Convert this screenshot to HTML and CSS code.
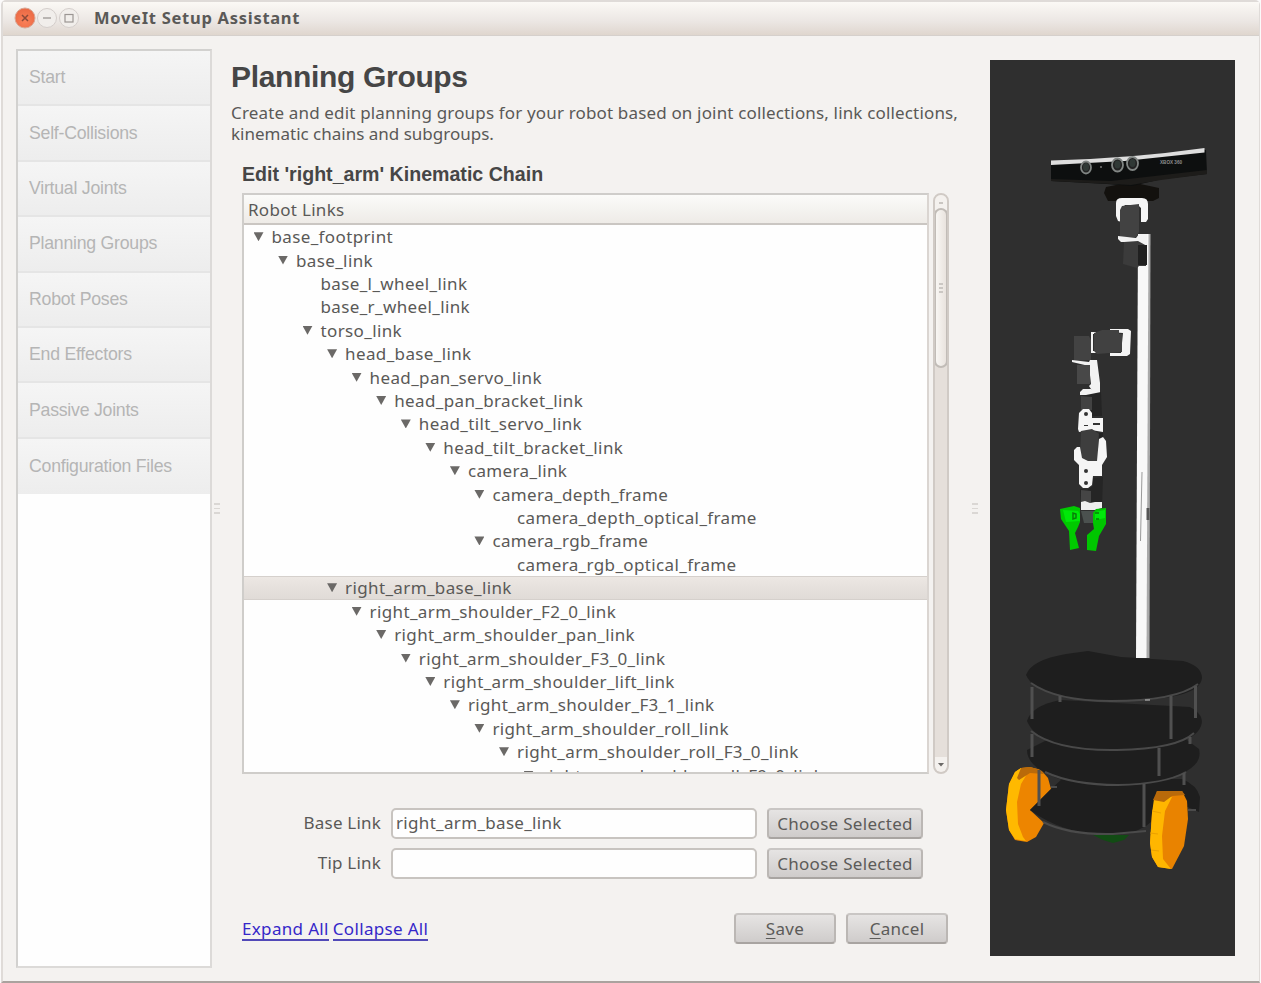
FILE: index.html
```html
<!DOCTYPE html>
<html lang="en">
<head>
<meta charset="utf-8">
<title>MoveIt Setup Assistant</title>
<link rel="stylesheet" href="styles.css">
</head>
<body>
<div class="window">
  <header class="titlebar">
    <svg class="controls" viewBox="0 0 68 26" width="68" height="26">
      <defs>
        <radialGradient id="close" cx=".5" cy=".65" r=".6"><stop offset="0" stop-color="#fb8058"/><stop offset="1" stop-color="#ea6a45"/></radialGradient>
      </defs>
      <circle cx="12" cy="13" r="10" fill="url(#close)" stroke="#d9a795" stroke-width="1"/>
      <path d="M9 10l6 6M15 10l-6 6" stroke="#8b4938" stroke-width="1.5"/>
      <circle cx="34" cy="13" r="9.5" fill="#f1eeeb" stroke="#d4cecb"/>
      <path d="M30 13h8" stroke="#9b9693" stroke-width="1.3"/>
      <circle cx="56" cy="13" r="9.5" fill="#f1eeeb" stroke="#d4cecb"/>
      <rect x="52" y="9.500" width="8" height="7.500" fill="none" stroke="#9b9693" stroke-width="1.2"/>
    </svg>
    <span class="title">MoveIt Setup Assistant</span>
  </header>
  <div class="body">
    <nav class="sidebar">
      <div class="step"><span>Start</span></div>
      <div class="step"><span>Self-Collisions</span></div>
      <div class="step"><span>Virtual Joints</span></div>
      <div class="step"><span>Planning Groups</span></div>
      <div class="step"><span>Robot Poses</span></div>
      <div class="step"><span>End Effectors</span></div>
      <div class="step"><span>Passive Joints</span></div>
      <div class="step"><span>Configuration Files</span></div>
    </nav>
    <div class="splitter left"><i></i><i></i><i></i></div>
    <main class="main">
      <h1>Planning Groups</h1>
      <p class="desc"><span class="d1">Create and edit planning groups for your robot based on joint collections, link collections,</span><br><span class="d2">kinematic chains and subgroups.</span></p>
      <h2>Edit 'right_arm' Kinematic Chain</h2>
      <div class="tree-area">
        <div class="tree">
          <div class="tree-head">Robot Links</div>
          <div class="rows">
            <div class="row l0"><b></b><span>base_footprint</span></div>
            <div class="row l1"><b></b><span>base_link</span></div>
            <div class="row l2 leaf"><b></b><span>base_l_wheel_link</span></div>
            <div class="row l2 leaf"><b></b><span>base_r_wheel_link</span></div>
            <div class="row l2"><b></b><span>torso_link</span></div>
            <div class="row l3"><b></b><span>head_base_link</span></div>
            <div class="row l4"><b></b><span>head_pan_servo_link</span></div>
            <div class="row l5"><b></b><span>head_pan_bracket_link</span></div>
            <div class="row l6"><b></b><span>head_tilt_servo_link</span></div>
            <div class="row l7"><b></b><span>head_tilt_bracket_link</span></div>
            <div class="row l8"><b></b><span>camera_link</span></div>
            <div class="row l9"><b></b><span>camera_depth_frame</span></div>
            <div class="row l10 leaf"><b></b><span>camera_depth_optical_frame</span></div>
            <div class="row l9"><b></b><span>camera_rgb_frame</span></div>
            <div class="row l10 leaf"><b></b><span>camera_rgb_optical_frame</span></div>
            <div class="row l3 selected"><b></b><span>right_arm_base_link</span></div>
            <div class="row l4"><b></b><span>right_arm_shoulder_F2_0_link</span></div>
            <div class="row l5"><b></b><span>right_arm_shoulder_pan_link</span></div>
            <div class="row l6"><b></b><span>right_arm_shoulder_F3_0_link</span></div>
            <div class="row l7"><b></b><span>right_arm_shoulder_lift_link</span></div>
            <div class="row l8"><b></b><span>right_arm_shoulder_F3_1_link</span></div>
            <div class="row l9"><b></b><span>right_arm_shoulder_roll_link</span></div>
            <div class="row l10"><b></b><span>right_arm_shoulder_roll_F3_0_link</span></div>
            <div class="row l11"><b></b><span>right_arm_shoulder_roll_F9_0_link</span></div>
          </div>
        </div>
        <div class="scrollbar">
          <div class="up"><i></i></div>
          <div class="thumb"><i></i><i></i><i></i></div>
          <div class="down"><b></b></div>
        </div>
      </div>
      <div class="form">
        <label>Base Link</label><div class="input">right_arm_base_link</div><button class="btn">Choose Selected</button>
        <label>Tip Link</label><div class="input"></div><button class="btn">Choose Selected</button>
      </div>
      <footer class="footer">
        <div class="links"><a>Expand All</a><a>Collapse All</a></div>
        <div class="actions"><button class="btn"><u>S</u>ave</button><button class="btn"><u>C</u>ancel</button></div>
      </footer>
    </main>
    <div class="splitter right"><i></i><i></i><i></i></div>
    <svg class="robot" viewBox="990 60 245 896" width="245" height="896">
      <rect x="990" y="60" width="245" height="896" fill="#2f2f2f"/>
      <!-- mast -->
      <path d="M1138 234h11v424h-13z" fill="#f8f8f8"/>
      <path d="M1148.500 234h2l-1 424h-3z" fill="#a9a9a9"/>
      <path d="M1142 472l-1.500 69" stroke="#999" stroke-width="1"/>
      <path d="M1148 508v12" stroke="#555" stroke-width="3"/>
      <!-- sensor -->
      <path d="M1106 187l25-5 28 6v10l-6 3h-45l-4-8z" fill="#13110e"/>
      <path d="M1051 163l155-13 1 24-45 5-30 7-25-2-56-3z" fill="#0d0f0f"/>
      <path d="M1051 179l60 2 96-11v4l-46 6-30 5-80-4z" fill="#1d1c1a"/>
      <path d="M1051 160.500q80-2 153.500-12.500v4.500l-80 8.500-73.500 4z" fill="#dedede"/>
      <g fill="#222" stroke="#818684" stroke-width="1.800">
        <ellipse cx="1086" cy="167.500" rx="5" ry="6"/><ellipse cx="1117.500" cy="165" rx="5.500" ry="6.500"/><ellipse cx="1132.500" cy="163.500" rx="5.500" ry="6.500"/>
      </g>
      <g fill="#303936"><ellipse cx="1086" cy="167" rx="3" ry="4"/><ellipse cx="1117.500" cy="164.500" rx="3" ry="4"/><ellipse cx="1132.500" cy="163" rx="3" ry="4"/></g>
      <circle cx="1101" cy="167" r="1" fill="#777"/>
      <text class="xbox" x="1160" y="164" textLength="22" lengthAdjust="spacingAndGlyphs">XBOX 360</text>
      <!-- pan and tilt head -->
      <path d="M1116 203q0-5 6-5h20q6 0 6 6v15l-2 3h-5v-14l-3-3h-13l-3 4v13l-4-1-2-5z" fill="#f5f5f5"/>
      <path d="M1122 206l17-2v28l-3 5h-16v-27z" fill="#424242"/>
      <path d="M1118 236l18 2 3-4h8v12l-10 1-4-5h-12l-3-3z" fill="#f2f2f2"/>
      <path d="M1124 242l14-1 9 5-1 20h-7l-2 2-14-4z" fill="#3b3b3b"/><path d="M1138 245h9v20h-9z" fill="#202020"/>
      <!-- arm -->
      <path d="M1110 329h18l3 2-1 23-3 2h-17v-3h11l2-20-13-1z" fill="#f4f4f4"/>
      <path d="M1091 332h5v2h-3v17h3v2h-5z" fill="#f4f4f4"/>
      <path d="M1094 333l8-3h17v4h3v18l-25 2-3-3z" fill="#414141"/>
      <path d="M1074 336h15l2 4v20l-17 1z" fill="#434343"/>
      <path d="M1072 360l17 2 1-2h7l3 23v10l-7-1-4-6 2-2-2-18-17-4z" fill="#f2f2f2"/>
      <path d="M1077 365h13v19h-13z" fill="#484848"/>
      <path d="M1080 392l3-3h8l4 2 5-1v3l-9 2h-11z" fill="#f2f2f2"/>
      <path d="M1081 396l20-4 1 24h-21z" fill="#242424"/><path d="M1081 396l11 1v13h-11z" fill="#424242"/>
      <path d="M1079 413l4-4h6l3 4v5h11v14l-12-2-12 2-1-3z" fill="#f5f5f5"/>
      <path d="M1081 431l11-2 7 5v29h-15l-4-5z" fill="#3e3e3e"/><path d="M1099 433h4v15h-5z" fill="#232323"/>
      <path d="M1077 447h3l2 11 6 3h9l2-22 4-2 3 4 1 16-5 8v11h-9l-1 9-4 3h-5l-4-4v-19l-5-5v-10z" fill="#f5f5f5"/>
      <path d="M1080 489l7 1 6-4v-8l10-1-1 29h-21z" fill="#252525"/><path d="M1081 490l10 1v12h-10z" fill="#454545"/>
      <path d="M1081 502l4-1 5 2 5-1h7v6l-7 2h-14z" fill="#eee"/>
      <g fill="#333"><circle cx="1086" cy="414" r="2"/><circle cx="1086" cy="471" r="2"/><circle cx="1086" cy="483" r="2"/><path d="M1084 425h4v1h-4zM1093 423h7v2h-7z"/></g>
      <!-- gripper -->
      <path d="M1081 511h16l-3 12h-10z" fill="#4b514f"/>
      <path d="M1060 509l14-3 6 2v14l-2 5-3 6 4 15-9 2-1-19-8-12z" fill="#00c900"/>
      <path d="M1063 510l15 1 2 3v7l-14 1z" fill="#00e808"/>
      <path d="M1106 508l-10 1-3 4v10l1 6-7 6v15l9 1 3-15 7-12z" fill="#00c600"/>
      <path d="M1095 512l10-2v8l-10 2z" fill="#00e80b"/>
      <path d="M1073 513v6l3-1v-4zM1095 513h4M1096 519h3" fill="none" stroke="#087d08" stroke-width="1.500"/>
      <!-- base plates and wheels -->
      <path d="M1093 835h36l-5 5-11 3-10-3z" fill="#124b14"/>
      <path d="M1021 768l9-1 11 3 7 8 3 11-21 21 14 13-8 14-9 5-12-2-6-10-3-20 3-26 6-12z" fill="#ed8500"/>
      <path d="M1021 768l9 1-9 15-4 18 1 22 5 13 3 4-11-2-6-9-3-20 3-26 6-12z" fill="#ffb900"/>
      <path d="M1021 768l9-1 11 3 3 4-14-1-11 7-2-2z" fill="#b96a0a"/>
      <path d="M1030 810l21-21 11-10h120q15 6 18 18l-1 15-23-10-30 24-14 7q-60 8-102-23z" fill="#1e1e1e"/>
      <path d="M1043 822q26 13 70 12l33-3M1051 787h6M1188 810h8" fill="none" stroke="#4b4b4b" stroke-width="2"/>
      <path d="M1027 750q0 22 50 34 60 8 104-10 22-10 18-25l-20-15h-120z" fill="#1e1e1e"/>
      <path d="M1045 772q28 13 73 13 47-1 68-13" fill="none" stroke="#4a4a4a" stroke-width="2"/>
      <path d="M1027 721q4-15 33-21l130 7q15 8 11 19-9 24-93 25-70-2-81-30z" fill="#1e1e1e"/>
      <path d="M1031 731q25 20 86 19 60-1 77-17" fill="none" stroke="#494949" stroke-width="2"/>
      <path d="M1026 675q5-15 40-21l22-3 33 6 62 4q19 5 19 17-2 23-90 23-75-1-86-26z" fill="#1e1e1e"/>
      <path d="M1031 683q25 18 80 18 65 0 87-17" fill="none" stroke="#494949" stroke-width="2"/>
      <path d="M1032 687v32M1195.500 686v32M1171 696v43M1060 696v6M1032 734v23M1159 748v28M1190 737v7M1039 770v36M1144 784v43M1184 773v12" fill="none" stroke="#505050" stroke-width="3"/>
      <path d="M1145 700h5" stroke="#c9c9c9"/>
      <path d="M1157 791h25l5 10 1 18-4 27-12 23-14-2-6-10-2-14 2-30z" fill="#e98300"/>
      <path d="M1154 799l9-2h9l-7 14-3 25 1 23 8 10-13-2-6-10-2-14 2-30z" fill="#ffb600"/>
      <path d="M1157 791h25l3 4-13 1-8 6-11-2z" fill="#b96a0a"/>
      <path d="M1152 811l9 2M1150 833l8 1M1151 850l8 1" stroke="#eba000" stroke-width="1"/>
    </svg>
  </div>
</div>
</body>
</html>
```
FILE: styles.css
```css
* { box-sizing: border-box; }
body { margin: 0; background: #fbfafa; font-family: "Noto Sans", sans-serif; font-size: 17px; color: #5a5957; overflow: hidden; }
.window { width: 1259px; height: 983px; margin-left: 1px; background: #f4f2f0; border: 2px solid #dfdbd8; border-right-width: 1px; border-bottom-color: #aaa29e; border-radius: 5px 5px 0 0; display: flex; flex-direction: column; }
.titlebar { height: 34px; flex: none; padding: 3px 0 0 10px; display: flex; align-items: flex-start; background: linear-gradient(#fbf9f5, #ebe6e3 60%, #dfd6ce); border-bottom: 1px solid #d5d0cc; }
.title { font-size: 16.5px; font-weight: 700; line-height: 26px; margin-left: 13px; letter-spacing: .72px; }
.body { flex: 1; display: flex; align-items: flex-start; padding: 13px 0 0 13px; }
.sidebar { width: 196px; height: 919px; flex: none; border: 2px solid #d2d1cf; border-right-color: #dcdad8; border-bottom-color: #dcdad8; background: #fefefe; }
.step { height: 55.4px; padding-left: 11px; display: flex; align-items: center; background: linear-gradient(#f5f5f5, #ededed); border-bottom: 2px solid #e5e5e5; font: 17.7px "Liberation Sans", sans-serif; letter-spacing: -.24px; color: #b5b5b5; }
.step:last-child { border-bottom: 0; }
.splitter { height: 919px; flex: none; display: flex; flex-direction: column; justify-content: center; gap: 3px; }
.splitter i { width: 6px; height: 1.500px; background: #dad7d4; }
.left { width: 19px; padding-left: 2px; }
.right { width: 29px; padding-left: 11px; }
.main { width: 730px; height: 919px; flex: none; display: flex; flex-direction: column; }
h1, h2 { margin: 0; font-family: "Liberation Sans", sans-serif; color: #464646; white-space: nowrap; }
h1 { font-size: 30px; letter-spacing: -.33px; line-height: 36px; margin-top: 10px; }
.desc { margin: 7px 0 0; line-height: 21px; white-space: nowrap; }
.d1 { letter-spacing: .158px; }
h2 { font-size: 19.6px; line-height: 24px; margin: 18px 0 0 11px; }
.tree-area { margin: 7px 0 0 11px; height: 581px; display: flex; gap: 4px; }
.tree { width: 687px; flex: none; border: 2px solid #cfcdca; border-right-color: #dad5d1; background: #fefefe; overflow: hidden; }
.tree-head { height: 30px; padding-left: 4px; line-height: 30px; letter-spacing: .3px; background: linear-gradient(#fbfbf9, #eeebe7); border-bottom: 2px solid #cac6c2; }
.row { height: 23.42px; display: flex; align-items: center; padding-left: 9.5px; white-space: nowrap; letter-spacing: .37px; border: solid transparent; border-width: 1px 0; }
.row b, .down b { width: 10px; height: 9px; flex: none; background: #6b6967; clip-path: polygon(0 0, 100% 0, 50% 100%); }
.row b { margin-right: 8px; }
.leaf b { visibility: hidden; }
.selected { background: linear-gradient(#ece7e3, #e0dbd7); border-color: #d5d0cc; }
.l1 { padding-left: 34px; } .l2 { padding-left: 58.5px; } .l3 { padding-left: 83.1px; }
.l4 { padding-left: 107.6px; } .l5 { padding-left: 132.2px; } .l6 { padding-left: 156.8px; }
.l7 { padding-left: 181.3px; } .l8 { padding-left: 205.9px; } .l9 { padding-left: 230.4px; }
.l10 { padding-left: 255px; } .l11 { padding-left: 279.5px; }
.scrollbar { width: 16px; height: 581px; border: 2px solid #d0cac5; border-radius: 8px; background: #e5dfda; display: flex; flex-direction: column; overflow: hidden; }
.up, .down { height: 15px; flex: none; background: #f4f1ee; display: flex; align-items: center; justify-content: center; }
.up i { width: 4px; height: 2px; background: #c9c5c1; }
.thumb { height: 160px; flex: none; margin: -2px -1px 0; border: 2px solid #c1bcb7; border-radius: 8px; background: linear-gradient(90deg, #f8f6f3, #e9e3de); display: flex; flex-direction: column; gap: 2px; align-items: center; justify-content: center; }
.thumb i { width: 4px; height: 2px; background: #cbc7c3; }
.down { margin-top: auto; border-radius: 0 0 7px 7px; }
.down b { width: 7px; height: 4px; }
.form { margin: 34px 0 0 11px; display: grid; grid-template-columns: 139px 366px 156px; column-gap: 10px; row-gap: 9px; }
.form label { line-height: 30px; text-align: right; letter-spacing: .2px; }
.input { height: 31px; line-height: 26px; padding-left: 3px; border: 2px solid #c8c4c0; border-radius: 5px; background: #fefefe; letter-spacing: .32px; }
.btn { height: 31px; padding: 0; border: 2px solid #bbb7b4; border-top-color: #c9c6c4; border-bottom-color: #a8a4a1; border-radius: 4px; background: linear-gradient(#e6e4e3, #cfcccb); font: inherit; line-height: 25px; letter-spacing: .3px; color: #5c5b59; white-space: nowrap; }
.footer { margin: 34px 13px 0 11px; display: flex; justify-content: space-between; }
.links { display: flex; gap: 4px; line-height: 31px; }
.links a { color: #3527c9; height: 28px; line-height: 32px; border-bottom: 2px solid #5149b8; letter-spacing: .33px; white-space: nowrap; }
.actions { display: flex; gap: 10px; }
.actions .btn { width: 102px; }
.actions u { text-underline-offset: 3px; }
.robot { flex: none; margin-top: 11px; }
.xbox { font: bold 6px "Liberation Sans", sans-serif; fill: #8f8f8f; }
```
